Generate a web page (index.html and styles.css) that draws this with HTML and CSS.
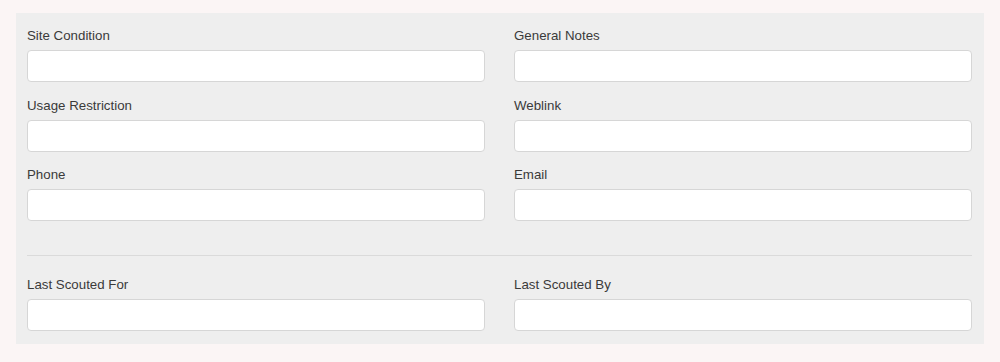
FILE: index.html
```html
<!DOCTYPE html>
<html lang="en">
<head>
  <meta charset="UTF-8" />
  <meta name="viewport" content="width=device-width, initial-scale=1.0" />
  <title>Location Details</title>
  <link rel="stylesheet" href="styles.css">
</head>
<body>
  <div class="panel">
    <div class="grid">
      <div class="field">
        <label>Site Condition</label>
        <input type="text" />
      </div>
      <div class="field">
        <label>General Notes</label>
        <input type="text" />
      </div>
      <div class="field">
        <label>Usage Restriction</label>
        <input type="text" />
      </div>
      <div class="field">
        <label>Weblink</label>
        <input type="text" />
      </div>
      <div class="field">
        <label>Phone</label>
        <input type="text" />
      </div>
      <div class="field">
        <label>Email</label>
        <input type="text" />
      </div>
    </div>
    <hr class="divider" />
    <div class="grid">
      <div class="field last">
        <label>Last Scouted For</label>
        <input type="text" />
      </div>
      <div class="field last">
        <label>Last Scouted By</label>
        <input type="text" />
      </div>
    </div>
  </div>
</body>
</html>
```

FILE: styles.css
```css
body {
  margin: 0;
  padding: 13px 16px;
  background: #fbf5f5;
  font-family: "Liberation Sans", Arial, sans-serif;
  font-size: 13.3px;
  color: #3a3a3a;
}
.panel {
  background: #eeeeee;
  padding: 14px 12px 13px 11px;
}
.grid {
  display: grid;
  grid-template-columns: 1fr 1fr;
  column-gap: 29px;
}
.field {
  display: flex;
  flex-direction: column;
  margin-bottom: 14.5px;
}
.field.last {
  margin-bottom: 0;
}
.field label {
  line-height: 18px;
  margin-bottom: 5px;
}
.field input {
  box-sizing: border-box;
  height: 32px;
  width: 100%;
  border: 1px solid #d6d6d6;
  border-radius: 4px;
  background: #fff;
  padding: 6px 10px;
  font: inherit;
}
.divider {
  border: none;
  border-top: 1px solid #dadada;
  margin: 19px 0 20px;
}
```
